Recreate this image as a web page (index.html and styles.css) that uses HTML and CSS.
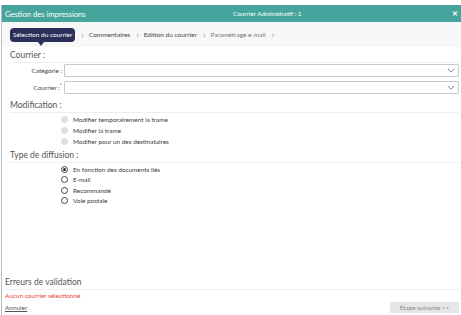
FILE: index.html
```html
<!DOCTYPE html>
<html lang="fr">
<head>
<meta charset="utf-8">
<link rel="stylesheet" href="styles.css">
</head>
<body>
<div class="topgap"></div>
<div class="window">
  <div class="titlebar">
    <span class="app-title">Gestion des impressions</span>
    <span class="doc-title">Courrier Administratif : 1</span>
    <span class="close">✕</span>
  </div>
  <div class="stepper">
    <span class="step active">Sélection du courrier</span>
    <span class="sep">›</span>
    <span class="step">Commentaires</span>
    <span class="sep">›</span>
    <span class="step">Edition du courrier</span>
    <span class="sep">›</span>
    <span class="step muted">Paramétrage e-mail</span>
    <span class="sep">›</span>
  </div>
  <div class="content">
    <div class="section first">
      <div class="section-title">Courrier :</div>
      <div class="field">
        <label class="field-label">Catégorie :</label>
        <div class="select"><svg class="chev" viewBox="0 0 10 6" width="8" height="5"><path d="M1 1 L5 5 L9 1" fill="none" stroke="#5a6478" stroke-width="1"/></svg></div>
      </div>
      <div class="field">
        <label class="field-label">Courrier :<sup>*</sup></label>
        <div class="select"><svg class="chev" viewBox="0 0 10 6" width="8" height="5"><path d="M1 1 L5 5 L9 1" fill="none" stroke="#5a6478" stroke-width="1"/></svg></div>
      </div>
    </div>
    <div class="section mod">
      <div class="section-title">Modification :</div>
      <div class="radios">
        <div class="radio disabled"><span class="dot"></span>Modifier temporairement la trame</div>
        <div class="radio disabled"><span class="dot"></span>Modifier la trame</div>
        <div class="radio disabled"><span class="dot"></span>Modifier pour un des destinataires</div>
      </div>
    </div>
    <div class="section diff">
      <div class="section-title">Type de diffusion :</div>
      <div class="radios tight">
        <div class="radio checked"><span class="dot"></span>En fonction des documents liés</div>
        <div class="radio"><span class="dot"></span>E-mail</div>
        <div class="radio"><span class="dot"></span>Recommandé</div>
        <div class="radio"><span class="dot"></span>Voie postale</div>
      </div>
    </div>
  </div>
  <div class="errors">
    <div class="errors-title">Erreurs de validation</div>
    <div class="error">Aucun courrier sélectionné</div>
  </div>
  <div class="footer">
    <a class="cancel">Annuler</a>
    <button class="next">Étape suivante &gt;&gt;</button>
  </div>
</div>
</body>
</html>
```

FILE: styles.css
```css
html, body {
  margin: 0;
  padding: 0;
  background: #ffffff;
  width: 461px;
  height: 315px;
  overflow: hidden;
  font-family: "Lato", "Open Sans", sans-serif;
}
.topgap { height: 5px; }
.window {
  height: 310px;
  margin-left: 1px;
  border-left: 1px solid #b9bcc0;
  display: flex;
  flex-direction: column;
  background: #fff;
}
.titlebar {
  height: 17px;
  background: #45a49b;
  color: #fff;
  display: flex;
  align-items: center;
  padding-left: 3px;
}
.app-title { font-size: 7.6px; width: 228px; white-space: nowrap; }
.doc-title { font-size: 6.3px; white-space: nowrap; }
.close {
  margin-left: auto;
  margin-right: 3px;
  font-size: 7px;
  font-weight: bold;
}
.stepper {
  height: 25px;
  background: #f7f7f7;
  display: flex;
  align-items: center;
  padding-left: 8px;
  font-size: 6.5px;
  color: #444;
  white-space: nowrap;
}
.step.active {
  background: #2b2f5a;
  color: #fff;
  border-radius: 4px;
  height: 14px;
  line-height: 14px;
  padding: 0 3px;
  position: relative;
}
.step.active::after {
  content: "";
  position: absolute;
  left: 28px;
  bottom: -4px;
  border-left: 3.5px solid transparent;
  border-right: 3.5px solid transparent;
  border-top: 4px solid #2b2f5a;
}
.step.muted { color: #777; }
.sep { color: #999; font-size: 9px; padding: 0 5px 0 6px; line-height: 10px; }
.content { padding: 0 2px 0 8px; flex: 1; }
.section-title {
  font-size: 8.5px;
  color: #555;
  border-bottom: 1px solid #eeeeee;
  line-height: 13px;
  white-space: nowrap;
}
.section.first { padding-top: 2px; }
.section.mod { margin-top: 5px; }
.section.mod .radios { padding-top: 0.5px; }
.section.diff { margin-top: 2px; }
.field {
  display: flex;
  align-items: center;
  margin-top: 1px;
  height: 13px;
}
.field + .field { margin-top: 4px; }
.field-label {
  width: 52px;
  text-align: right;
  font-size: 6.4px;
  color: #444;
  padding-right: 2px;
  white-space: nowrap;
}
.field-label sup { font-size: 5px; vertical-align: 3px; line-height: 0; }
.select {
  flex: 1;
  height: 11px;
  border: 1px solid #c9c9c9;
  border-radius: 1px;
  background: #fff;
  display: flex;
  align-items: center;
  justify-content: flex-end;
  padding-right: 3px;
}
.radios { padding: 1.5px 0 0 51px; }
.radio {
  display: flex;
  align-items: center;
  font-size: 6.4px;
  color: #3a3a3a;
  height: 11px;
  white-space: nowrap;
}
.radios.tight .radio { height: 10.5px; }
.dot {
  width: 7px;
  height: 7px;
  border: 1px solid #444;
  border-radius: 50%;
  margin-right: 5px;
  box-sizing: border-box;
  position: relative;
  background: #fff;
  flex: none;
}
.radio.disabled .dot { background: #dddde2; border-color: #dddde2; }
.radio.checked .dot::after {
  content: "";
  position: absolute;
  left: 1px; top: 1px;
  width: 3px; height: 3px;
  border-radius: 50%;
  background: #222;
}
.errors { padding: 0 2px 0 3px; }
.errors-title {
  font-size: 8.5px;
  color: #555;
  border-bottom: 1px solid #eeeeee;
  line-height: 13px;
}
.error {
  color: #e8413a;
  font-size: 6.4px;
  margin-top: 1px;
  line-height: 10px;
}
.footer {
  display: flex;
  justify-content: space-between;
  align-items: center;
  padding: 0 2px 1px 3px;
  height: 13px;
}
.cancel {
  font-size: 6.4px;
  color: #555;
  text-decoration: underline;
}
.next {
  font-family: inherit;
  font-size: 6.3px;
  color: #8a8a8a;
  background: #e6e6e6;
  border: none;
  width: 69px;
  height: 11px;
  padding: 0;
}
```
